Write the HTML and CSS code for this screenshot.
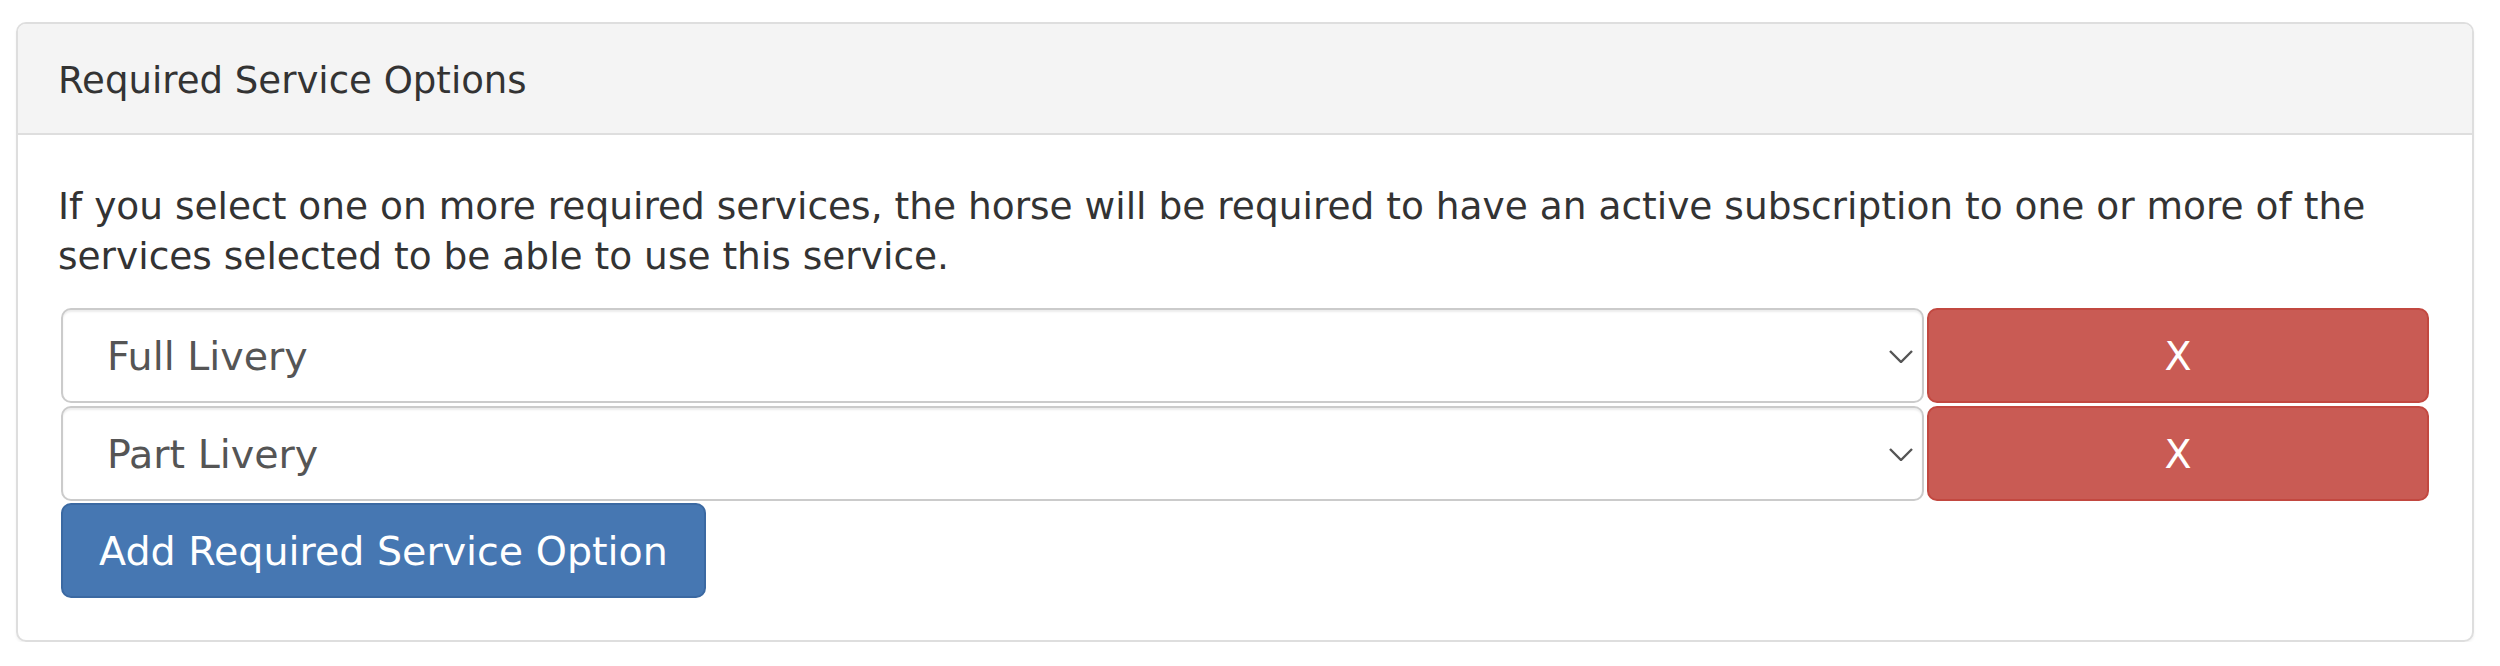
FILE: index.html
```html
<!DOCTYPE html>
<html lang="en">
    <head>
        <meta charset="UTF-8">
        <meta name="viewport" content="width=device-width, initial-scale=1.0">
        <title>Required Service Options</title>
        <link rel="stylesheet" href="styles.css">
    </head>
    <body>
        <div class="panel">
            <div class="panel-heading">Required Service Options</div>

            <div class="panel-body">
                <p>If you select one on more required services, the horse will be required to have an active subscription to one or more of the services selected to be able to use this service.</p>

                <div class="service-list">
                    <div class="service-row">
                        <div class="select-wrap">
                            <select class="form-control">
                                <option selected>Full Livery</option>
                                <option>Part Livery</option>
                                <option>DIY Livery</option>
                            </select>
                            <svg class="chevron" viewBox="0 0 24 13" width="24" height="13">
                                <polyline points="1,1 12,12 23,1" fill="none" stroke="#555" stroke-width="2.4"/>
                            </svg>
                        </div>
                        <button type="button" class="btn btn-danger">X</button>
                    </div>

                    <div class="service-row">
                        <div class="select-wrap">
                            <select class="form-control">
                                <option>Full Livery</option>
                                <option selected>Part Livery</option>
                                <option>DIY Livery</option>
                            </select>
                            <svg class="chevron" viewBox="0 0 24 13" width="24" height="13">
                                <polyline points="1,1 12,12 23,1" fill="none" stroke="#555" stroke-width="2.4"/>
                            </svg>
                        </div>
                        <button type="button" class="btn btn-danger">X</button>
                    </div>
                </div>

                <button type="button" class="btn btn-primary add-btn">Add Required Service Option</button>
            </div>
        </div>
    </body>
</html>
```

FILE: styles.css
```css
body {
    margin: 0;
    padding: 22px 26px 0 16px;
    font-family: "DejaVu Sans", Verdana, sans-serif;
    color: #333;
    background-color: white;
}

.panel {
    border: 2px solid #dedede;
    border-radius: 10px;
    box-shadow: 0 2px 3px rgba(0,0,0,0.05);
    overflow: hidden;
}

.panel-heading {
    height: 105px;
    line-height: 105px;
    padding: 4px 40px 0 40px;
    font-size: 37.1px;
    background-color: #f4f4f4;
    border-bottom: 2px solid #dedede;
}

.panel-body {
    padding: 46px 40px 42px 40px;
}

.panel-body p {
    margin: 0 0 27px 0;
    font-size: 37.5px;
    line-height: 50px;
}

.service-list {
    display: flex;
    flex-direction: column;
    gap: 3px;
    margin: 0 3px;
}

.service-row {
    display: grid;
    grid-template-columns: 1fr 502px;
    column-gap: 3px;
    height: 95px;
}

.select-wrap {
    position: relative;
}

.form-control {
    appearance: none;
    -webkit-appearance: none;
    width: 100%;
    height: 100%;
    padding: 0 60px 0 44px;
    font-family: inherit;
    font-size: 39.6px;
    color: #555;
    background-color: white;
    border: 2px solid #cbcbcb;
    border-radius: 10px;
    box-shadow: inset 0 2px 2px rgba(0,0,0,0.075);
    box-sizing: border-box;
}

.chevron {
    position: absolute;
    right: 11px;
    top: 50%;
    margin-top: -6px;
    pointer-events: none;
}

.btn {
    font-family: inherit;
    font-size: 39.6px;
    color: white;
    border-radius: 10px;
    cursor: pointer;
    box-sizing: border-box;
}

.btn-danger {
    height: 95px;
    background-color: #c95b54;
    border: 2px solid #c24840;
}

.btn-primary {
    background-color: #4677b2;
    border: 2px solid #3b69a2;
}

.add-btn {
    display: block;
    margin: 2px 0 0 3px;
    height: 95px;
    padding: 0 36px;
}
```
